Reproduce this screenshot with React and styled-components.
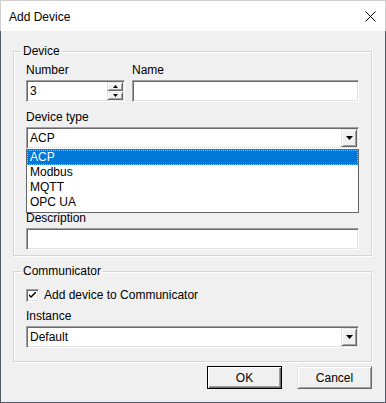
import React from 'react'
import styled, { createGlobalStyle } from 'styled-components'

const GlobalStyle = createGlobalStyle`
  html, body {
    margin: 0;
    padding: 0;
    background: #f0f0f0;
  }
  body {
    font-family: 'Liberation Sans', Arial, sans-serif;
    font-size: 12px;
    color: #000;
  }
`

// classic win32 bevels
const sunken = `
  border: 1px solid;
  border-color: #a0a0a0 #ffffff #ffffff #a0a0a0;
  box-shadow: inset 1px 1px 0 #696969, inset -1px -1px 0 #e3e3e3;
`
const raised = `
  border: 1px solid;
  border-color: #e3e3e3 #696969 #696969 #e3e3e3;
  box-shadow: inset 1px 1px 0 #ffffff, inset -1px -1px 0 #a0a0a0;
`

const Window = styled.div`
  width: 386px;
  height: 403px;
  display: flex;
  flex-direction: column;
  box-sizing: border-box;
`

const TitleBar = styled.div`
  height: 31px;
  box-sizing: border-box;
  background: #fff;
  border: 1px solid #d0d0d0;
  border-bottom: 0;
  display: flex;
  align-items: center;
  justify-content: space-between;
  padding: 0 9px 0 8px;
`

const Title = styled.span`
  font-size: 12px;
  line-height: 14px;
  padding-top: 1px;
`

const Body = styled.div`
  flex: 1;
  background: #f0f0f0;
  border: 1px solid #535862;
  border-top: 0;
  padding: 13px 13px 0 12px;
  display: flex;
  flex-direction: column;
`

const Group = styled.fieldset`
  margin: 0;
  padding: 0;
  min-width: 0;
  border: 1px solid #d5d5d5;
  box-shadow: inset 1px 1px 0 #fff, 1px 1px 0 #fff;
  & + & {
    margin-top: 8px;
  }
`

const Legend = styled.legend`
  margin-left: 7px;
  padding: 0 2px;
  font-size: 12px;
  line-height: 14px;
`

const GroupBody = styled.div`
  display: flex;
  flex-direction: column;
  padding: ${p => p.$pad};
`

const Row = styled.div`
  display: flex;
  gap: 7px;
`

const Field = styled.div`
  display: flex;
  flex-direction: column;
  gap: 2px;
  position: relative;
  width: ${p => p.$w || 'auto'};
  flex: ${p => (p.$w ? 'none' : '1')};
  margin-top: ${p => p.$mt || 0}px;
`

const Label = styled.label`
  display: block;
  height: 15px;
  line-height: 15px;
`

const TextBox = styled.div`
  height: 22px;
  box-sizing: border-box;
  background: #fff;
  ${sunken};
  padding: 1px 1px 1px 3px;
  display: flex;
  align-items: center;
  line-height: 18px;
`

const Value = styled.span`
  flex: 1;
`

const Spinner = styled.div`
  width: 16px;
  height: 18px;
  display: flex;
  flex-direction: column;
  gap: 1px;
`

const SpinButton = styled.div`
  flex: 1;
  box-sizing: border-box;
  background: #f0f0f0;
  ${raised};
  display: flex;
  align-items: center;
  justify-content: center;
`

const SelectBox = styled(TextBox)`
  padding-right: 1px;
  padding-top: 1px;
  padding-bottom: 1px;
`

const DropButton = styled.div`
  width: 16px;
  height: 18px;
  box-sizing: border-box;
  background: #f0f0f0;
  ${raised};
  display: flex;
  align-items: center;
  justify-content: center;
`

const ListBox = styled.ul`
  position: absolute;
  left: 0;
  right: 0;
  top: 100%;
  margin: 0;
  padding: 0 0 2px 0;
  list-style: none;
  background: #fff;
  border: 1px solid #646464;
  z-index: 2;
`

const ListItem = styled.li`
  height: 15px;
  line-height: 15px;
  padding-left: 3px;
  background: ${p => (p.$selected ? '#0078d7' : 'transparent')};
  color: ${p => (p.$selected ? '#fff' : '#000')};
  outline: ${p => (p.$selected ? '1px dotted #f5a058' : 'none')};
  outline-offset: -1px;
`

const CheckRow = styled.div`
  display: flex;
  align-items: center;
  gap: 5px;
  height: 15px;
  line-height: 15px;
`

const CheckBox = styled.div`
  width: 13px;
  height: 13px;
  box-sizing: border-box;
  background: #fff;
  ${sunken};
  display: flex;
  align-items: center;
  justify-content: center;
`

const Buttons = styled.div`
  display: flex;
  justify-content: flex-end;
  gap: 15px;
  margin-top: 4px;
`

const Button = styled.button`
  width: 75px;
  height: 23px;
  box-sizing: border-box;
  margin: 0;
  padding: 0;
  font-family: 'Liberation Sans', Arial, sans-serif;
  font-size: 12px;
  color: #000;
  background: #f0f0f0;
  ${p =>
    p.$default
      ? `border: 1px solid #000;
         box-shadow: inset 1px 1px 0 #fff, inset -1px -1px 0 #696969, inset -2px -2px 0 #a0a0a0;`
      : raised}
`

function Arrow({ up, w = 7, h = 4 }) {
  const pts = up ? `0,${h} ${w},${h} ${w / 2},0` : `0,0 ${w},0 ${w / 2},${h}`
  return (
    <svg width={w} height={h} viewBox={`0 0 ${w} ${h}`}>
      <polygon points={pts} fill="#000" />
    </svg>
  )
}

const types = ['ACP', 'Modbus', 'MQTT', 'OPC UA']

export default function App() {
  return (
    <>
      <GlobalStyle />
      <Window>
        <TitleBar>
          <Title>Add Device</Title>
          <svg width="11" height="11" viewBox="0 0 11 11">
            <path d="M0.5 0.5 L10.5 10.5 M10.5 0.5 L0.5 10.5" stroke="#000" strokeWidth="1" />
          </svg>
        </TitleBar>
        <Body>
          <Group>
            <Legend>Device</Legend>
            <GroupBody $pad="5px 12px 5px 12px">
              <Row>
                <Field $w="99px">
                  <Label>Number</Label>
                  <TextBox style={{ paddingRight: 1 }}>
                    <Value>3</Value>
                    <Spinner>
                      <SpinButton><Arrow up w={5} h={3} /></SpinButton>
                      <SpinButton><Arrow w={5} h={3} /></SpinButton>
                    </Spinner>
                  </TextBox>
                </Field>
                <Field>
                  <Label>Name</Label>
                  <TextBox />
                </Field>
              </Row>
              <Field $mt={8}>
                <Label>Device type</Label>
                <SelectBox>
                  <Value>ACP</Value>
                  <DropButton><Arrow /></DropButton>
                  <ListBox>
                    {types.map((t, i) => (
                      <ListItem key={t} $selected={i === 0}>{t}</ListItem>
                    ))}
                  </ListBox>
                </SelectBox>
              </Field>
              <Field $mt={62}>
                <Label>Description</Label>
                <TextBox />
              </Field>
            </GroupBody>
          </Group>
          <Group>
            <Legend>Communicator</Legend>
            <GroupBody $pad="10px 12px 13px 12px">
              <CheckRow>
                <CheckBox>
                  <svg width="7" height="7" viewBox="0 0 7 7">
                    <path d="M0 2 L0 4 L2 6 L7 1 L7 -1 L2 4 Z" fill="#000" />
                  </svg>
                </CheckBox>
                <span>Add device to Communicator</span>
              </CheckRow>
              <Field $mt={6}>
                <Label>Instance</Label>
                <SelectBox>
                  <Value>Default</Value>
                  <DropButton><Arrow /></DropButton>
                </SelectBox>
              </Field>
            </GroupBody>
          </Group>
          <Buttons>
            <Button $default>OK</Button>
            <Button>Cancel</Button>
          </Buttons>
        </Body>
      </Window>
    </>
  )
}
